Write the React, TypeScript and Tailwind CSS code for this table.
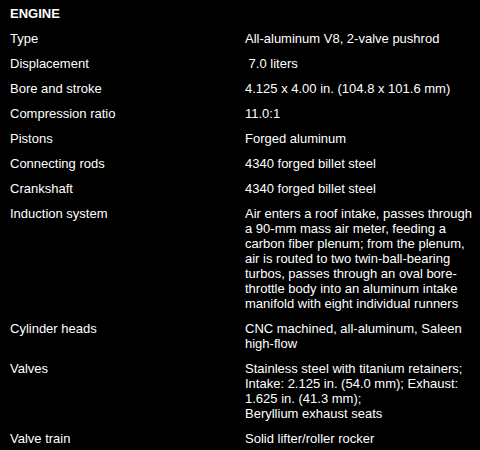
const specs: { label: string; value: string[] }[] = [
  { label: "Type", value: ["All-aluminum V8, 2-valve pushrod"] },
  { label: "Displacement", value: ["\u00a07.0 liters"] },
  { label: "Bore and stroke", value: ["4.125 x 4.00 in. (104.8 x 101.6 mm)"] },
  { label: "Compression ratio", value: ["11.0:1"] },
  { label: "Pistons", value: ["Forged aluminum"] },
  { label: "Connecting rods", value: ["4340 forged billet steel"] },
  { label: "Crankshaft", value: ["4340 forged billet steel"] },
  {
    label: "Induction system",
    value: [
      "Air enters a roof intake, passes through",
      "a 90-mm mass air meter, feeding a",
      "carbon fiber plenum; from the plenum,",
      "air is routed to two twin-ball-bearing",
      "turbos, passes through an oval bore-",
      "throttle body into an aluminum intake",
      "manifold with eight individual runners",
    ],
  },
  { label: "Cylinder heads", value: ["CNC machined, all-aluminum, Saleen", "high-flow"] },
  {
    label: "Valves",
    value: [
      "Stainless steel with titanium retainers;",
      "Intake: 2.125 in. (54.0 mm); Exhaust:",
      "1.625 in. (41.3 mm);",
      "Beryllium exhaust seats",
    ],
  },
  { label: "Valve train", value: ["Solid lifter/roller rocker"] },
];

export default function App() {
  return (
    <div className="h-[450px] w-[480px] overflow-hidden bg-black text-white font-['Liberation_Sans',Arial,sans-serif] text-[13px] leading-[15px]">
      <div className="px-[10px] pt-[6px] pb-[5px] text-[13px] font-bold leading-[15px]">ENGINE</div>
      <div className="grid grid-cols-[245px_1fr]">
        {specs.map((row) => (
          <div key={row.label} className="contents">
            <div className="py-[5px] pl-[10px] pr-2">{row.label}</div>
            <div className="whitespace-nowrap py-[5px]">
              {row.value.map((line) => (
                <div key={line}>{line}</div>
              ))}
            </div>
          </div>
        ))}
      </div>
    </div>
  );
}
